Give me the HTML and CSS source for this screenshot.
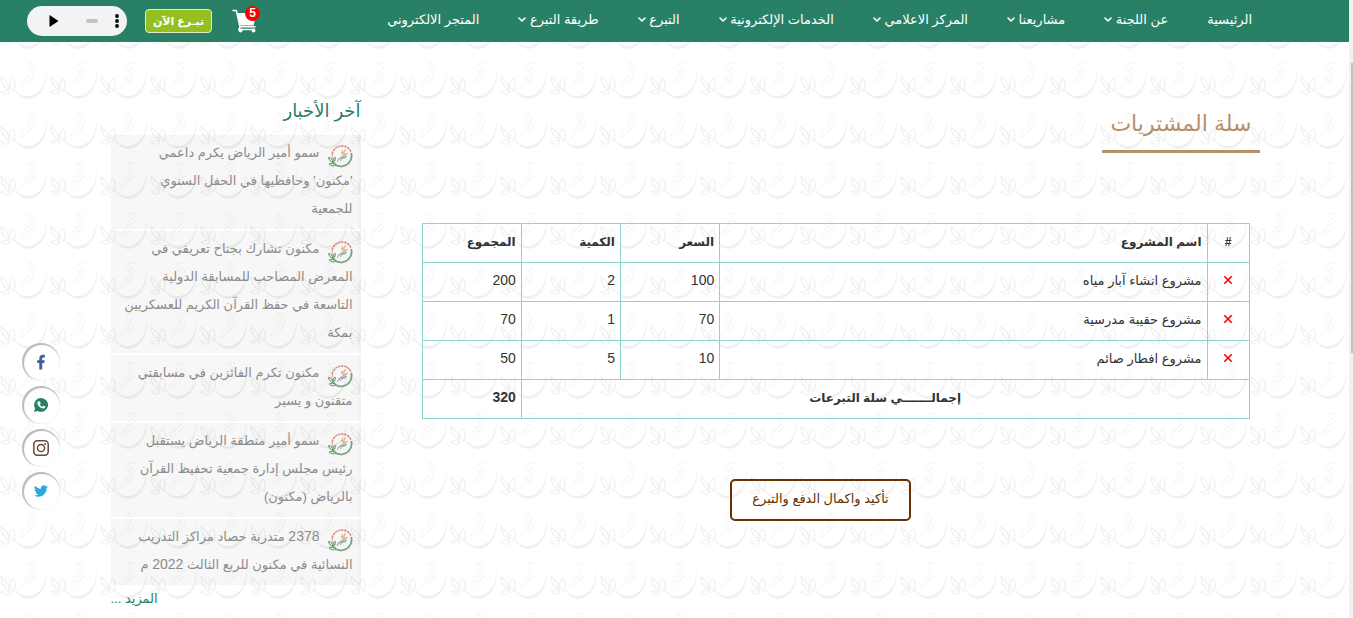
FILE: index.html
```html
<!DOCTYPE html>
<html lang="ar" dir="rtl">
<head>
<meta charset="utf-8">
<title>سلة المشتريات</title>
<link rel="stylesheet" href="styles.css">
</head>
<body>
<svg class="defs" width="0" height="0" aria-hidden="true">
  <symbol id="chev" viewBox="0 0 8 6"><path d="M1 1l3 3 3-3" fill="none" stroke="currentColor" stroke-width="1.6" stroke-linecap="round" stroke-linejoin="round"/></symbol>
  <symbol id="cross" viewBox="0 0 10 10"><path d="M1.3 1.3l7.4 7.4M8.7 1.3L1.3 8.7" fill="none" stroke="currentColor" stroke-width="1.6"/></symbol>
  <symbol id="emblem" viewBox="0 0 25 23">
    <path d="M4 9C5.500 3.500 9.500 1 14 1c4 0 7.500 2 9 6" fill="none" stroke="#d3827c" stroke-width="1.400" stroke-dasharray="2.500 .7"/>
    <path d="M4.500 9c-.8 3-.5 6 1 8.500M23.200 8v7" fill="none" stroke="#d3827c" stroke-width=".8"/>
    <path d="M23.300 8c1.600 6-2.300 12-8.300 13.200-4 .7-7.500-1-9.500-3.700" fill="none" stroke="#76a67f" stroke-width="1.700"/>
    <path d="M8 20c-2-2-5-2-7-1 2 2 5 2.500 7 1zM5 17.500c-2.500-.5-4-2.500-4.500-5 2.500.5 4.500 2.500 4.500 5zM5.500 17c-.5-2 0-4 1.500-5 .8 2 .2 4-1.500 5z" fill="#e5efe6" stroke="#5d9468" stroke-width="1"/>
    <path d="M9 17l3-4 4-3 4-2M10 14.500l3-1.500 5 0M12 16l4-4 3-.5M14 13.500l4-4" fill="none" stroke="#8c8c8c" stroke-width=".8"/>
    <path d="M13 7.500l2.500 1.500 2-5M14 5.500l1.500 3" fill="none" stroke="#ebb88e" stroke-width="1.500"/>
  </symbol>
</svg>

<header class="topbar">
  <nav class="nav">
    <a href="#">الرئيسية</a>
    <a href="#">عن اللجنة <svg class="chev"><use href="#chev"/></svg></a>
    <a href="#">مشاريعنا <svg class="chev"><use href="#chev"/></svg></a>
    <a href="#">المركز الاعلامي <svg class="chev"><use href="#chev"/></svg></a>
    <a href="#">الخدمات الإلكترونية <svg class="chev"><use href="#chev"/></svg></a>
    <a href="#">التبرع <svg class="chev"><use href="#chev"/></svg></a>
    <a href="#">طريقة التبرع <svg class="chev"><use href="#chev"/></svg></a>
    <a href="#">المتجر الالكتروني</a>
  </nav>
  <div class="tools">
    <a class="cart" href="#" aria-label="السلة">
      <svg width="26" height="24" viewBox="0 0 26 24"><path d="M1 1.500h3.300L8 17.800h15" fill="none" stroke="#fff" stroke-width="1.500" stroke-linejoin="round" stroke-linecap="round"/><path d="M5 4h20l-3.500 12.500H7.800z" fill="#fff"/><path d="M8 17.800l-1 2.700h16" fill="none" stroke="#fff" stroke-width="1.500"/><circle cx="8.500" cy="21.500" r="1.900" fill="#fff"/><circle cx="21.500" cy="21.500" r="1.900" fill="#fff"/></svg>
      <span class="badge">5</span>
    </a>
    <button class="donate" type="button">تبـرع الآن</button>
    <div class="player" dir="ltr">
      <button type="button" aria-label="Play"><svg width="10" height="12" viewBox="0 0 10 12"><path d="M.5 0l9 6-9 6z"/></svg></button>
      <span class="track"></span>
      <button type="button" aria-label="More"><svg width="4" height="14" viewBox="0 0 4 14"><circle cx="2" cy="2" r="1.900"/><circle cx="2" cy="7" r="1.900"/><circle cx="2" cy="12" r="1.900"/></svg></button>
    </div>
  </div>
</header>

<div class="container">
  <main class="main">
    <h1 class="title">سلة المشتريات</h1>
    <table class="basket">
      <colgroup><col class="c-del"><col><col class="c-num"><col class="c-num"><col class="c-num"></colgroup>
      <thead>
        <tr><th class="center">#</th><th>اسم المشروع</th><th>السعر</th><th>الكمية</th><th>المجموع</th></tr>
      </thead>
      <tbody>
        <tr><td class="center"><button class="del" type="button" aria-label="حذف"><svg width="10" height="10"><use href="#cross"/></svg></button></td><td>مشروع انشاء آبار مياه</td><td class="num">100</td><td class="num">2</td><td class="num">200</td></tr>
        <tr><td class="center"><button class="del" type="button" aria-label="حذف"><svg width="10" height="10"><use href="#cross"/></svg></button></td><td>مشروع حقيبة مدرسية</td><td class="num">70</td><td class="num">1</td><td class="num">70</td></tr>
        <tr><td class="center"><button class="del" type="button" aria-label="حذف"><svg width="10" height="10"><use href="#cross"/></svg></button></td><td>مشروع افطار صائم</td><td class="num">10</td><td class="num">5</td><td class="num">50</td></tr>
        <tr><th class="center" colspan="4">إجمالـــــــي سلة التبرعات</th><th class="num">320</th></tr>
      </tbody>
    </table>
    <button class="confirm" type="button">تأكيد واكمال الدفع والتبرع</button>
  </main>

  <aside class="news">
    <h2>آخر الأخبار</h2>
    <ul>
      <li><a href="#"><svg class="emblem"><use href="#emblem"/></svg>سمو أمير الرياض يكرم داعمي<br>'مكنون' وحافظيها في الحفل السنوي<br>للجمعية</a></li>
      <li><a href="#"><svg class="emblem"><use href="#emblem"/></svg>مكنون تشارك بجناح تعريفي في<br>المعرض المصاحب للمسابقة الدولية<br>التاسعة في حفظ القرآن الكريم للعسكريين<br>بمكة</a></li>
      <li><a href="#"><svg class="emblem"><use href="#emblem"/></svg>مكنون تكرم الفائزين في مسابقتي<br>متقنون و يسير</a></li>
      <li><a href="#"><svg class="emblem"><use href="#emblem"/></svg>سمو أمير منطقة الرياض يستقبل<br>رئيس مجلس إدارة جمعية تحفيظ القرآن<br>بالرياض (مكنون)</a></li>
      <li><a href="#"><svg class="emblem"><use href="#emblem"/></svg><span class="num">2378</span> متدربة حصاد مراكز التدريب<br>النسائية في مكنون للربع الثالث <span class="num">2022</span> م</a></li>
    </ul>
    <a class="more" href="#">المزيد ...</a>
  </aside>
</div>

<div class="social">
  <a href="#" aria-label="Facebook"><svg width="16" height="16" viewBox="0 0 16 16"><path d="M6.300 15.500V9H4.200V6.300h2.100V4.500C6.300 2 7.600.8 9.900.8h1.900v2.700h-1.300c-.9 0-1.300.4-1.300 1.200v1.600h2.500L11.300 9H9.200v6.500z" fill="#3f5f9f"/></svg></a>
  <a href="#" aria-label="WhatsApp"><svg width="16" height="16" viewBox="0 0 16 16"><path d="M8.100 1a6.900 6.900 0 1 1-3.200 13L1 15l1.100-3.600A6.900 6.900 0 0 1 8.100 1z" fill="#288066"/><path d="M5.700 4.200l1.200.2.800 1.900-.8 1.100c.6 1.100 1.400 1.800 2.500 2.300l1-1 1.900.9c.1 1.300-.9 2-2 2-3.200-.3-5.700-2.800-6-5.500 0-.8.500-1.600 1.400-1.900z" fill="#fff"/></svg></a>
  <a href="#" aria-label="Instagram"><svg width="16" height="16" viewBox="0 0 16 16"><g fill="none" stroke="#6d453b" stroke-width="1.500"><rect x=".8" y=".8" width="14.400" height="14.400" rx="3.500"/><circle cx="8" cy="8" r="3.600"/></g><circle cx="12.200" cy="3.900" r="1" fill="#6d453b"/></svg></a>
  <a href="#" aria-label="Twitter"><svg width="14" height="14" viewBox="0 0 24 24"><path d="M24 4.600a10 10 0 0 1-2.800.8 4.900 4.900 0 0 0 2.100-2.700 9.800 9.800 0 0 1-3.100 1.200 4.900 4.900 0 0 0-8.400 4.500A14 14 0 0 1 1.700 3.200a4.900 4.900 0 0 0 1.500 6.500 4.900 4.900 0 0 1-2.200-.6c0 2.300 1.600 4.400 3.900 4.900a5 5 0 0 1-2.200.1 4.900 4.900 0 0 0 4.600 3.400A9.900 9.900 0 0 1 0 19.500a13.900 13.900 0 0 0 7.500 2.200c9.100 0 14.300-7.700 14-14.600A10 10 0 0 0 24 4.600z" fill="#2aa9e0"/></svg></a>
</div>
<div class="scrollbar" aria-hidden="true"></div>
</body>
</html>
```
FILE: styles.css
```css
* { box-sizing: border-box; }

html { overflow: hidden; }

body {
  margin: 0;
  padding-right: 4px;
  font: 13px/28px "Liberation Sans", "DejaVu Sans", sans-serif;
  color: #333;
  background: #fff url("data:image/svg+xml,%3Csvg xmlns='http://www.w3.org/2000/svg' width='50' height='50'%3E%3Cpath d='M14 38c4 6 9 8.500 15 8 9-1 16-9 17-21v-3h.5c1 14-6 25-16 26.700-7 .8-13-3-16.500-10.700z' fill='%23f0f0f0'/%3E%3Cg fill='none' stroke='%23efefef'%3E%3Cpath d='M14 41c-4-3-5-5-4-9 3-6 7-1 4 9zM9 40c-5-3-8-7-8-13 5 3 8 7 8 13zM10 42c-3-2-6-2-9 0 3 3 7 3 9 0z' stroke-width='1.200'/%3E%3Cpath d='M20 36l6-9 6-3 4-4M21 38l6-5 8-7M25 32l4-6M29 32l4-6' stroke='%23f2f2f2' stroke-dasharray='3 1'/%3E%3Cpath d='M26 18l3 4 4-3M26 16l3-4 1 5M30 14l5-1M29 23c1-4 3-6 5-6' stroke='%23f2f2f2' stroke-dasharray='2 1'/%3E%3C/g%3E%3C/svg%3E") left 0 top 0;
}

a { color: inherit; text-decoration: none; }
button { font: inherit; color: inherit; background: none; border: 0; padding: 0; cursor: pointer; }
.defs { position: absolute; }
.num { font-size: 14px; }

.topbar {
  display: flex;
  justify-content: space-between;
  align-items: center;
  height: 42px;
  padding: 0 97px 0 27px;
  background: #288066;
  color: #fff;
}
.nav { display: flex; gap: 39px; padding-bottom: 2px; white-space: nowrap; }
.chev { width: 8px; height: 6px; vertical-align: 1px; }
.tools { display: flex; align-items: center; gap: 20px; }
.cart { position: relative; display: flex; }
.badge {
  position: absolute;
  top: -3px;
  right: -2px;
  width: 15px;
  height: 15px;
  border-radius: 50%;
  background: #f00;
  font-weight: bold;
  font-size: 12px;
  line-height: 15px;
  text-align: center;
}
.donate {
  width: 67px;
  height: 24px;
  margin-left: -2px;
  border: 1px solid #e3efc2;
  border-radius: 4px;
  background: #93c01f;
  font-weight: bold;
  font-size: 11px;
  line-height: 20px;
  white-space: nowrap;
}
.player {
  display: flex;
  align-items: center;
  justify-content: space-between;
  width: 100px;
  height: 30px;
  padding: 0 8px 0 22px;
  border-radius: 15px;
  background: #f1f3f4;
}
.player button { display: flex; }
.track { width: 12px; height: 4px; margin-left: 10px; border-radius: 2px; background: #c0c2c3; }

.container {
  display: grid;
  grid-template-columns: 1fr 250px;
  gap: 61px;
  max-width: 1170px;
  margin: 0 auto;
  padding-left: 21px;
}
.main { padding-top: 60px; text-align: center; }
.title {
  width: fit-content;
  margin: 0 0 70px;
  padding: 0 8px 4px;
  border-bottom: 3px solid #b5906d;
  color: #b5906d;
  font-size: 22px;
  line-height: 44px;
  font-weight: normal;
}
.basket {
  width: calc(100% - 10px);
  margin-right: 10px;
  border-collapse: collapse;
  table-layout: fixed;
  text-align: right;
}
.basket th, .basket td { height: 39px; padding: 0 5px 2px; border: 1px solid #8fd3cf; line-height: 28px; }
.basket th { font-size: 12px; }
.basket .num { padding-bottom: 4px; font-size: 14px; }
.basket .center { text-align: center; }
.c-del { width: 42px; }
.c-num { width: 12%; }
.del { color: #f00; }
.confirm {
  margin: 60px 40px 0 0;
  height: 42px;
  padding: 0 20px 2px;
  border: 2px solid #630;
  border-radius: 5px;
  color: #630;
}

.news { padding-top: 51px; white-space: nowrap; }
.news h2 { margin: 0 0 6px; color: #288066; font-size: 18px; line-height: 36px; font-weight: normal; }
.news ul { display: grid; gap: 2px; margin: 0; padding: 0; list-style: none; }
.news li {
  padding: 4px 5px 6px 0;
  border-right: 3px solid rgba(0, 0, 0, 0.05);
  background: rgba(0, 0, 0, 0.03);
  background-clip: padding-box;
  color: #8c8c8c;
}
.news .num { line-height: 1; }
.emblem { float: right; width: 25px; height: 23px; margin: 6px 0 -4px 8px; }
.more { display: block; text-align: left; color: #288066; }

.social { position: fixed; left: 22px; top: 343px; display: grid; gap: 5px; }
.social a {
  display: grid;
  place-items: center;
  width: 38px;
  height: 38px;
  border-radius: 50%;
  background: #fff;
  box-shadow: inset 1px 1px 1px 1px #b9b9b9, inset -2px -2px 1px 1px #fff;
}
.scrollbar { position: fixed; top: 0; right: 0; bottom: 0; width: 4px; background: #f1f1f1; }
.scrollbar::before { content: ""; position: absolute; top: 63px; right: 0; width: 2px; height: 290px; background: #c1c1c1; }
```
